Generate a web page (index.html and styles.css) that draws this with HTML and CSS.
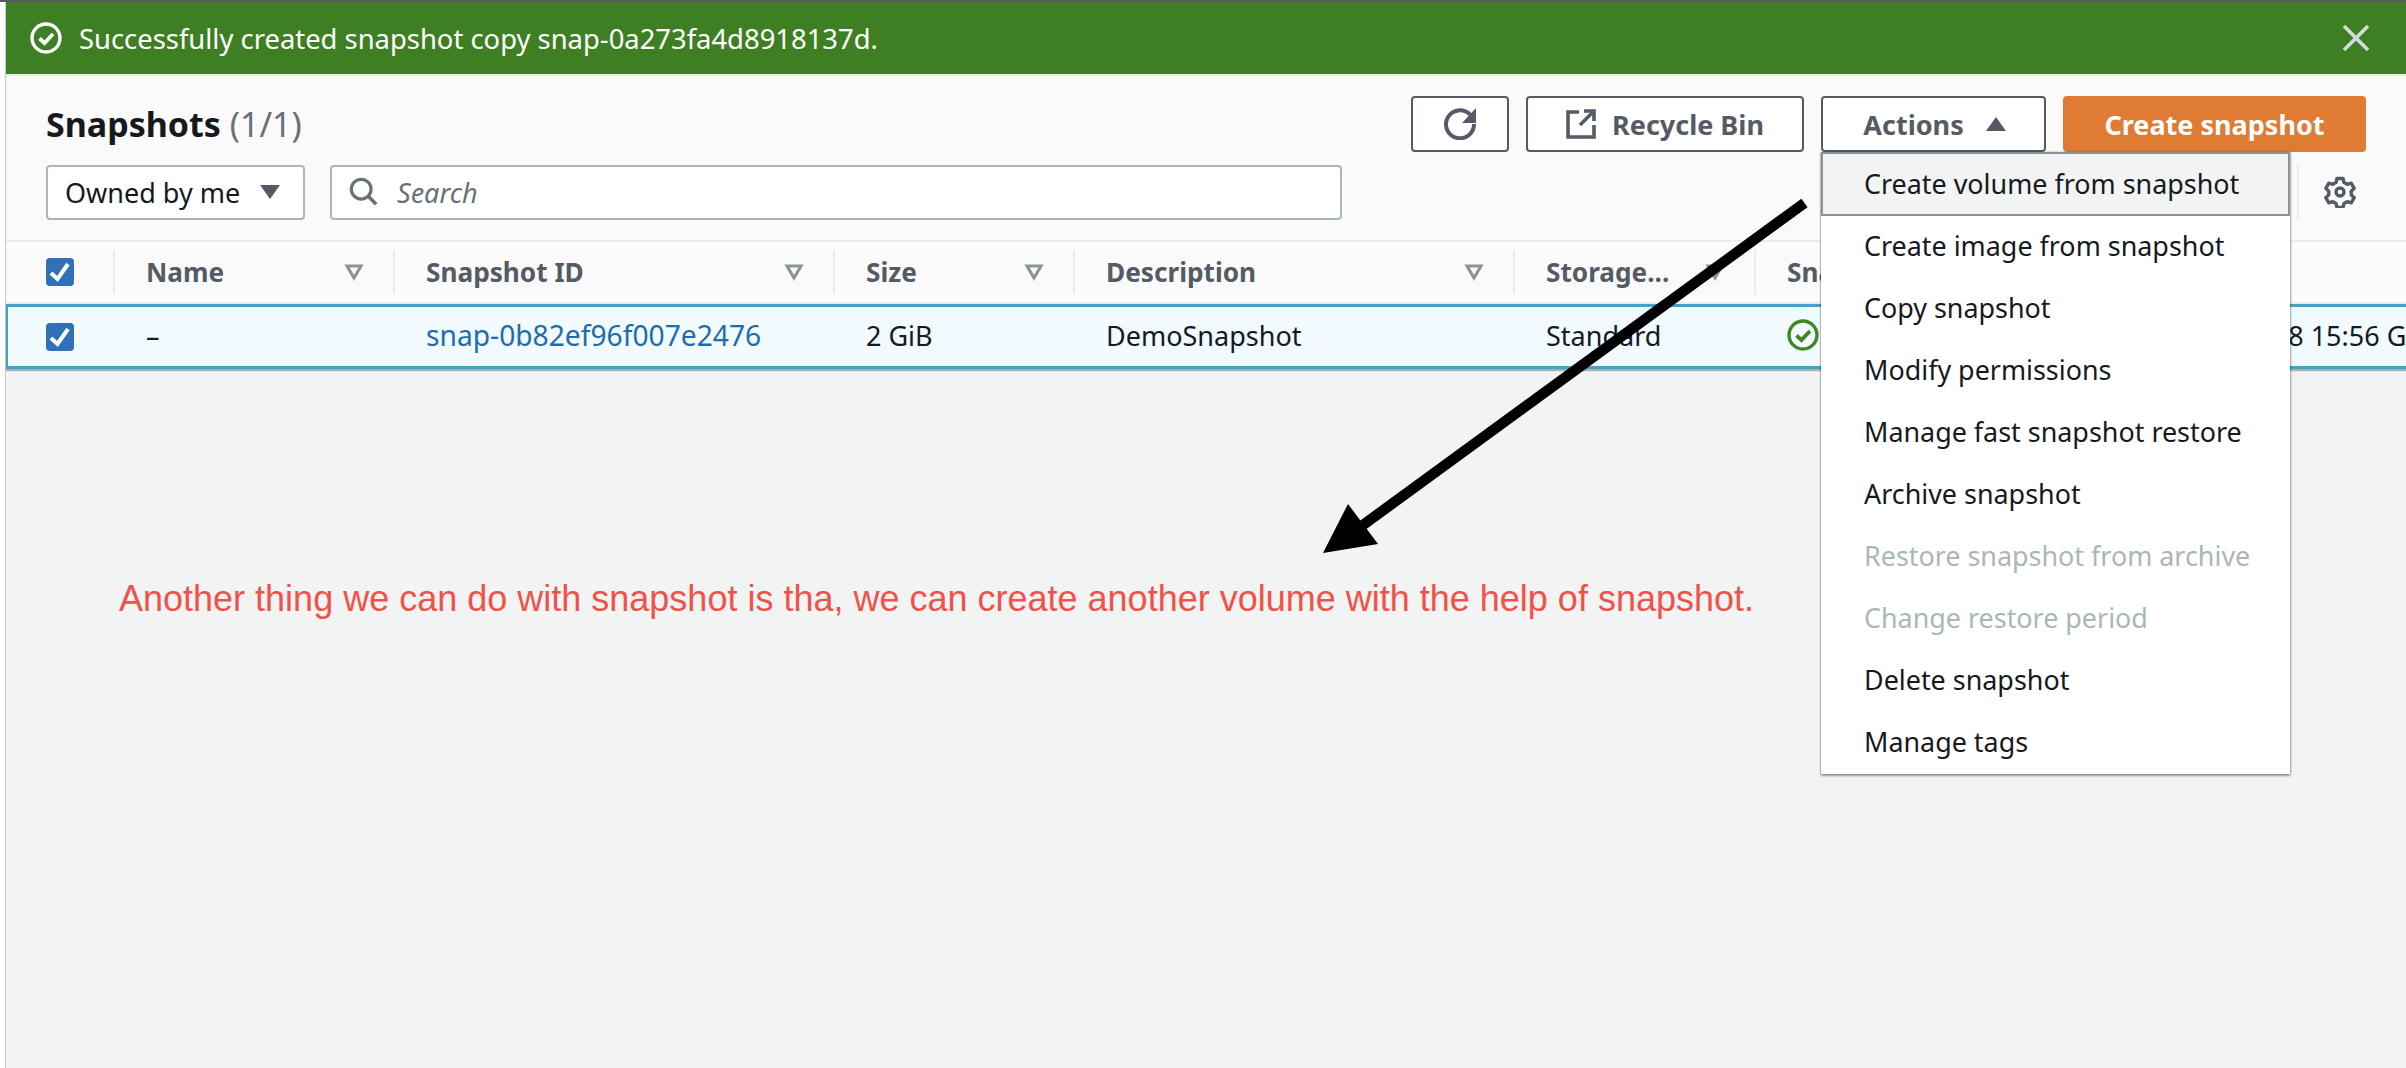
FILE: index.html
```html
<!DOCTYPE html>
<html lang="en">

<head>
    <meta charset="UTF-8">
    <meta name="viewport" content="width=device-width, initial-scale=1.0">
    <title>Snapshots</title>
    <link rel="stylesheet" href="styles.css">
</head>

<body>
    <div class="top-strip"></div>

    <div class="page">
        <div class="flash">
            <svg class="flash-icon" viewBox="0 0 32 32">
                <circle cx="16" cy="16" r="14" fill="none" stroke="#fff" stroke-width="3.4" />
                <path d="M9.5 16.5l5 4.5 8.500-9" fill="none" stroke="#fff" stroke-width="3.8" />
            </svg>
            <span class="flash-text">Successfully created snapshot copy snap-0a273fa4d8918137d.</span>
            <svg class="flash-close" viewBox="0 0 28 28">
                <path d="M2 2l24 24M26 2L2 26" fill="none" stroke="#d5dbdb" stroke-width="3.6" />
            </svg>
        </div>

        <div class="panel-head">
            <div class="title-row">
                <h1>Snapshots <span class="count">(1/1)</span></h1>
                <div class="actions">
                    <button class="btn btn-refresh" aria-label="Refresh">
                        <svg class="icon" viewBox="0 0 32 32">
                            <path d="M26 6.500A14 14 0 1 0 30 16" fill="none" stroke="#545b64" stroke-width="4" />
                            <path d="M32 0V15H18z" fill="#545b64" />
                        </svg>
                    </button>
                    <button class="btn btn-bin">
                        <svg class="bin-icon" viewBox="0 0 30 30">
                            <path d="M13 3H2v25h26V16" fill="none" stroke="#545b64" stroke-width="3.6" />
                            <path d="M18 2h10v10" fill="none" stroke="#545b64" stroke-width="3.6" />
                            <path d="M27 3L14 16" fill="none" stroke="#545b64" stroke-width="3.6" />
                        </svg>
                        Recycle Bin
                    </button>
                    <div class="dropdown">
                        <button class="btn btn-actions">
                            Actions
                            <svg class="caret" viewBox="0 0 22 16"><path d="M11 1l10 14H1z" fill="#545b64" /></svg>
                        </button>
                        <ul class="menu">
                            <li class="hover">Create volume from snapshot</li>
                            <li>Create image from snapshot</li>
                            <li>Copy snapshot</li>
                            <li>Modify permissions</li>
                            <li>Manage fast snapshot restore</li>
                            <li>Archive snapshot</li>
                            <li class="disabled">Restore snapshot from archive</li>
                            <li class="disabled">Change restore period</li>
                            <li>Delete snapshot</li>
                            <li>Manage tags</li>
                        </ul>
                    </div>
                    <button class="btn btn-primary">Create snapshot</button>
                </div>
            </div>

            <div class="filter-row">
                <div class="select">
                    Owned by me
                    <svg class="caret" viewBox="0 0 22 16"><path d="M1 1h20L11 15z" fill="#545b64" /></svg>
                </div>
                <div class="search">
                    <svg class="search-icon" viewBox="0 0 32 32">
                        <circle cx="13" cy="13" r="10.5" fill="none" stroke="#687078" stroke-width="3.4" />
                        <path d="M20.5 20.5L29 29" fill="none" stroke="#687078" stroke-width="3.8" />
                    </svg>
                    <span>Search</span>
                </div>
                <div class="prefs">
                    <svg class="icon" viewBox="0 0 32 32">
                        <path d="M13 2.500h6l1 4 3.200 1.800 4-1.200 3 5.200-3 2.900v3.600l3 2.900-3 5.200-4-1.200-3.200 1.800-1 4h-6l-1-4-3.200-1.800-4 1.200-3-5.200 3-2.900v-3.600l-3-2.900 3-5.200 4 1.200L12 6.500z" fill="none" stroke="#545b64" stroke-width="3.4" stroke-linejoin="round" />
                        <circle cx="16" cy="16" r="4" fill="none" stroke="#545b64" stroke-width="3.4" />
                    </svg>
                </div>
            </div>
        </div>

        <table class="snapshots">
            <colgroup>
                <col class="col-check">
                <col class="col-name">
                <col class="col-id">
                <col class="col-size">
                <col class="col-desc">
                <col class="col-storage">
                <col class="col-status">
                <col class="col-started">
            </colgroup>
            <thead>
                <tr>
                    <th class="check-cell"><span class="checkbox"><svg viewBox="0 0 28 28"><path d="M5 15l6.500 6L22 6" fill="none" stroke="#fff" stroke-width="4" /></svg></span></th>
                    <th><div class="th-in">Name <svg class="sort" viewBox="0 0 20 18"><path d="M3 3h14l-7 12z" fill="none" stroke="#879596" stroke-width="3" /></svg></div></th>
                    <th><div class="th-in">Snapshot ID <svg class="sort" viewBox="0 0 20 18"><path d="M3 3h14l-7 12z" fill="none" stroke="#879596" stroke-width="3" /></svg></div></th>
                    <th><div class="th-in">Size <svg class="sort" viewBox="0 0 20 18"><path d="M3 3h14l-7 12z" fill="none" stroke="#879596" stroke-width="3" /></svg></div></th>
                    <th><div class="th-in">Description <svg class="sort" viewBox="0 0 20 18"><path d="M3 3h14l-7 12z" fill="none" stroke="#879596" stroke-width="3" /></svg></div></th>
                    <th><div class="th-in">Storage... <svg class="sort" viewBox="0 0 20 18"><path d="M3 3h14l-7 12z" fill="none" stroke="#879596" stroke-width="3" /></svg></div></th>
                    <th><div class="th-in">Snapshot status</div></th>
                    <th><div class="th-in no-sep">Started</div></th>
                </tr>
            </thead>
            <tbody>
                <tr class="selected">
                    <td class="check-cell"><span class="checkbox"><svg viewBox="0 0 28 28"><path d="M5 15l6.500 6L22 6" fill="none" stroke="#fff" stroke-width="4" /></svg></span></td>
                    <td>–</td>
                    <td><a href="#">snap-0b82ef96f007e2476</a></td>
                    <td>2 GiB</td>
                    <td>DemoSnapshot</td>
                    <td>Standard</td>
                    <td>
                        <span class="status">
                            <svg class="status-icon" viewBox="0 0 32 32">
                                <circle cx="16" cy="16" r="14" fill="none" stroke="#3f8624" stroke-width="3.4" />
                                <path d="M9.500 16.500l5 4.500 8.500-9" fill="none" stroke="#3f8624" stroke-width="3.800" />
                            </svg>
                            Completed
                        </span>
                    </td>
                    <td class="started">2022/09/18 15:56 GMT+5:30</td>
                </tr>
            </tbody>
        </table>

        <p class="note">Another thing we can do with snapshot is tha, we can create another volume with the help of snapshot.</p>
    </div>

    <!-- annotation drawn on top of the screenshot -->
    <svg class="annotation" viewBox="0 0 2406 1068">
        <path d="M1804.500 203L1363 525" fill="none" stroke="#000" stroke-width="10.500" />
        <path d="M1323 553L1348 504L1378 544z" fill="#000" />
    </svg>
</body>

</html>
```

FILE: styles.css
```css
* {
    box-sizing: border-box;
}

html, body {
    height: 100%;
}

body {
    margin: 0;
    overflow: hidden;
    background-color: #fff;
    color: #16191f;
    font-family: "Noto Sans", Arial, sans-serif;
    font-size: 27px;
}

.top-strip {
    height: 2px;
    background-color: #545b64;
}

.page {
    display: flex;
    flex-direction: column;
    height: 1066px;
    margin-left: 6px;
    background-color: #f2f3f3;
    box-shadow: -1px 0 0 #c9cccc;
}

/* flash bar */
.flash {
    display: flex;
    align-items: center;
    flex: none;
    height: 72px;
    padding: 0 36px 0 24px;
    background-color: #3f7f24;
    color: #fff;
}

.flash-icon {
    width: 32px;
    height: 32px;
    margin-right: 17px;
}

.flash-text {
    flex: 1;
    font-size: 27.4px;
}

.flash-close {
    width: 28px;
    height: 28px;
}

/* header */
.panel-head {
    flex: none;
    height: 168px;
    padding: 20px 40px 0;
    border-top: 2px solid #eaeded;
    border-bottom: 2px solid #eaeded;
    background-color: #fafafa;
}

.title-row {
    display: flex;
    align-items: center;
    justify-content: space-between;
}

h1 {
    margin: 0;
    font-size: 34px;
    font-weight: 700;
}

.count {
    color: #687078;
    font-weight: 400;
}

.actions {
    display: flex;
    gap: 17px;
}

.btn {
    display: flex;
    align-items: center;
    justify-content: center;
    height: 56px;
    padding: 0;
    border: 2px solid #545b64;
    border-radius: 4px;
    background-color: #fff;
    color: #545b64;
    font-family: inherit;
    font-size: 27px;
    font-weight: 700;
}

.btn-refresh {
    width: 98px;
}

.btn-bin {
    gap: 16px;
    width: 278px;
}

.btn-actions {
    gap: 21px;
    width: 225px;
    padding-left: 3px;
}

.btn-primary {
    width: 303px;
    border-color: #e07b33;
    background-color: #e07b33;
    color: #fff;
}

.icon {
    width: 32px;
    height: 32px;
}

.bin-icon {
    width: 30px;
    height: 30px;
}

.caret {
    width: 22px;
    height: 16px;
}

/* actions dropdown */
.dropdown {
    position: relative;
}

.menu {
    position: absolute;
    top: 100%;
    left: 0;
    z-index: 5;
    width: 469px;
    margin: 0;
    padding: 0;
    font-size: 26.9px;
    list-style: none;
    background-color: #fff;
    box-shadow: 0 2px 2px rgba(0, 28, 36, 0.4), 1px 0 2px rgba(0, 28, 36, 0.25), -1px 0 1px rgba(0, 28, 36, 0.15);
}

.menu li {
    display: flex;
    align-items: center;
    height: 62px;
    padding-bottom: 3px;
    padding-left: 43px;
}

.menu li.hover {
    height: 64px;
    padding-bottom: 2px;
    padding-left: 41px;
    border: 2px solid #879596;
    background-color: #f2f3f3;
}

.menu li.disabled {
    color: #aab7b8;
}

/* filters */
.filter-row {
    display: flex;
    align-items: center;
    margin-top: 12px;
}

.select {
    display: flex;
    align-items: center;
    justify-content: space-between;
    width: 259px;
    height: 55px;
    padding: 0 22px 0 17px;
    border: 2px solid #aab7b8;
    border-radius: 4px;
    background-color: #fff;
}

.search {
    display: flex;
    align-items: center;
    width: 1012px;
    height: 55px;
    margin-left: 25px;
    padding-left: 17px;
    border: 2px solid #aab7b8;
    border-radius: 4px;
    background-color: #fff;
    color: #687078;
    font-style: italic;
}

.search-icon {
    width: 30px;
    height: 30px;
    margin-right: 18px;
}

.prefs {
    display: flex;
    align-items: center;
    height: 56px;
    margin-left: auto;
    margin-right: 10px;
    padding-left: 25px;
    border-left: 2px solid #eaeded;
}

/* table */
.snapshots {
    flex: none;
    width: 2400px;
    table-layout: fixed;
    border-collapse: separate;
    border-spacing: 0;
}

.col-check { width: 107px; }
.col-name { width: 280px; }
.col-id { width: 440px; }
.col-size { width: 240px; }
.col-desc { width: 440px; }
.col-storage { width: 241px; }
.col-status { width: 373px; }

.snapshots th {
    height: 62px;
    padding: 0;
    border-bottom: 2px solid #eaeded;
    background-color: #fafafa;
    color: #545b64;
    font-size: 26.2px;
    font-weight: 700;
    text-align: left;
}

.th-in {
    display: flex;
    align-items: center;
    justify-content: space-between;
    height: 44px;
    padding: 0 29px 0 31px;
    border-left: 2px solid #eaeded;
}

.th-in.no-sep {
    border-left: none;
}

.sort {
    width: 20px;
    height: 18px;
}

.snapshots td {
    height: 65px;
    padding: 0 0 3px 33px;
    border-top: 3px solid #44a2c9;
    border-bottom: 3px solid #44a2c9;
    background-color: #f1faff;
    white-space: nowrap;
    overflow: hidden;
}

.snapshots td:first-child {
    border-left: 2px solid #44a2c9;
}

.snapshots .check-cell {
    padding: 0 0 0 40px;
    line-height: 0;
}

.snapshots td.check-cell {
    padding-left: 38px;
}

.selected {
    box-shadow: 0 2px 1px rgba(0, 28, 36, 0.3);
}

.checkbox {
    display: inline-block;
    width: 28px;
    height: 28px;
    border-radius: 4px;
    background-color: #2f70b7;
}

.checkbox svg {
    display: block;
    width: 28px;
    height: 28px;
}

.snapshots a {
    color: #1e6bb0;
    font-size: 28.2px;
    text-decoration: none;
}

.status {
    display: flex;
    align-items: center;
    gap: 10px;
}

.status-icon {
    width: 32px;
    height: 32px;
}

/* red annotation text */
.note {
    margin: 210px 0 0 113px;
    color: #f0524a;
    font-family: "Liberation Sans", Arial, sans-serif;
    font-size: 36px;
    line-height: 40px;
}

.annotation {
    position: absolute;
    top: 0;
    left: 0;
    z-index: 10;
    width: 2406px;
    height: 1068px;
    pointer-events: none;
}
```
